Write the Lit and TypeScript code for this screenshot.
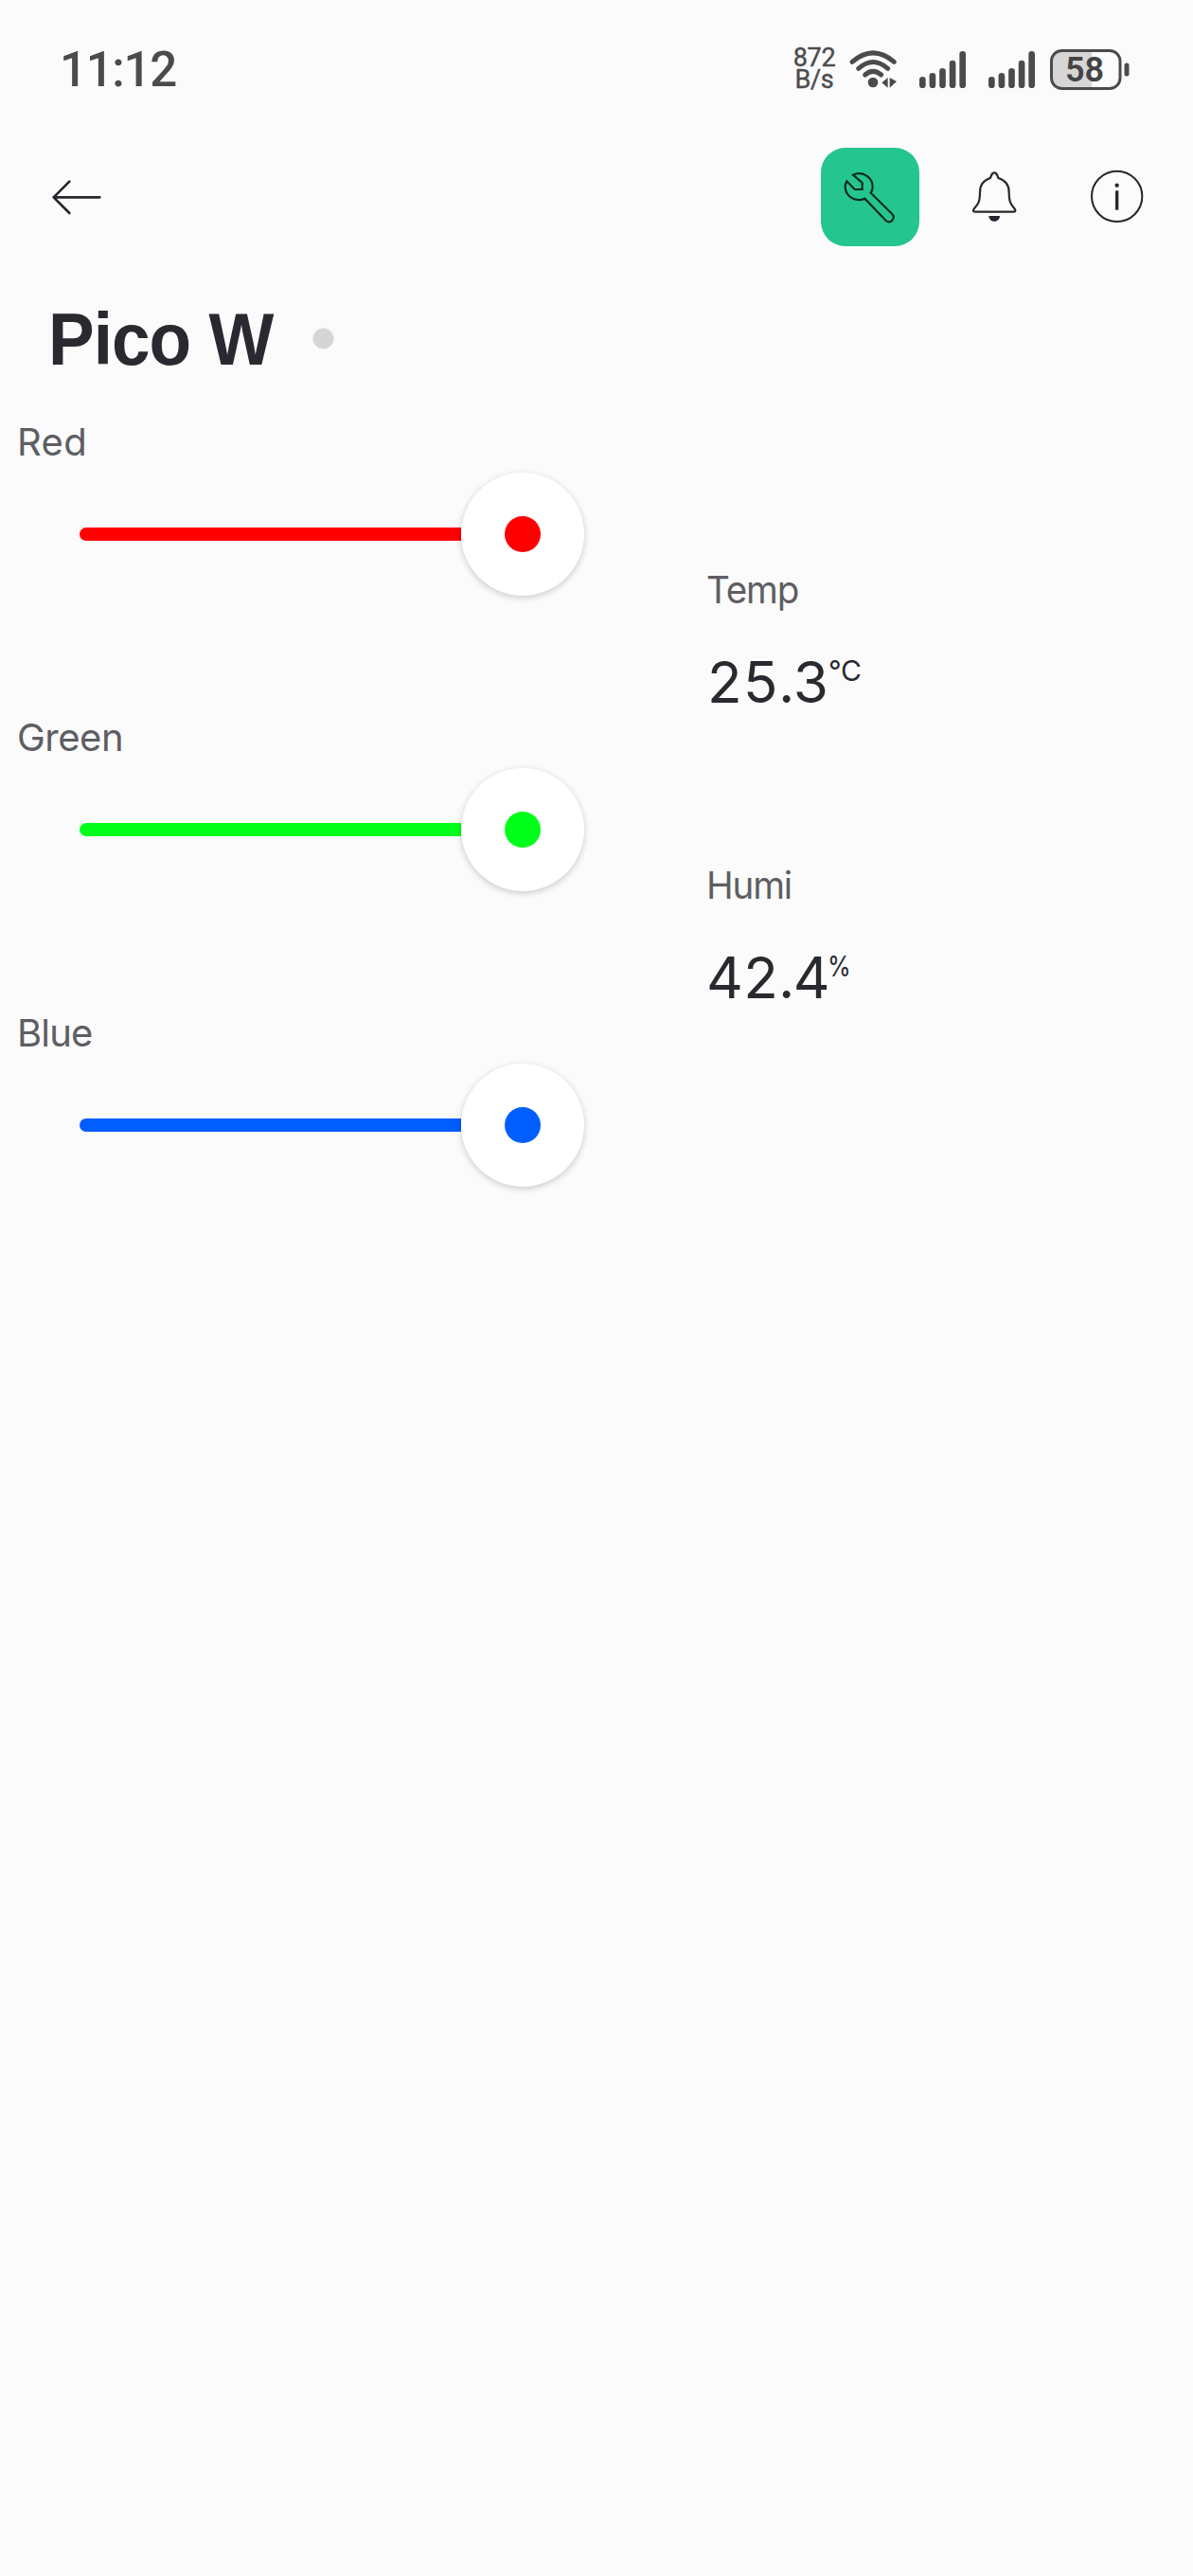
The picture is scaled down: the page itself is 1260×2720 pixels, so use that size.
import { LitElement, html, css, svg } from "lit";
import { customElement, property } from "lit/decorators.js";

@customElement("status-bar")
class StatusBar extends LitElement {
  static styles = css`
    :host { display: flex; height: 146px; align-items: center; color: #4b4b4b; fill: #4b4b4b; stroke: #4b4b4b; font-family: Roboto, sans-serif; padding: 0 67px 0 63px; box-sizing: border-box; }
    svg { display: block; overflow: visible; }
    .time { font-size: 51px; font-weight: 500; letter-spacing: -1.3px; line-height: 60px; margin-right: auto; padding-top: 2px; }
    .rate { display: flex; flex-direction: column; font-size: 27px; line-height: 23px; width: 46px; text-align: center; letter-spacing: -0.3px; margin-right: 14px; -webkit-text-stroke: 0.4px #4b4b4b; }
    .wifi { margin-right: 22px; }
    .sim { margin-right: 24px; }
    .sim2 { margin-right: 16px; }
    .bat { display: grid; align-items: center; }
    .bat > * { grid-area: 1 / 1; }
    .pct { font-size: 36px; font-weight: 600; line-height: 42px; padding: 1px 0 0 16px; color: #444; z-index: 1; }
  `;
  private bars(cls: string) {
    return html`<svg class=${cls} width="49" height="39" viewBox="0 0 147 117" stroke="none">
      ${[36, 48, 63, 88, 117].map((h, i) => svg`<rect x=${i * 31.75} y=${117 - h} width="20" height=${h} rx="10" />`)}
    </svg>`;
  }
  render() {
    return html`
      <div class="time">11:12</div>
      <div class="rate"><span>872</span><span>B/s</span></div>
      <svg class="wifi" width="52" height="44" viewBox="232 60 156 132" fill="none" stroke-width="15" stroke-linecap="round">
        <path d="M241 103Q307 46 374 103M261 124Q307 83 354 124M282 144Q307 122 333 144" />
        <circle cx="307" cy="168" r="16" fill="#4b4b4b" stroke="none" />
        <path d="M335 169L354 153V185ZM360 153V185L382 165Z" fill="#4b4b4b" stroke="none" />
      </svg>
      ${this.bars("sim")}${this.bars("sim2")}
      <div class="bat">
        <svg width="84" height="43" viewBox="0 0 84 43">
          <path d="M44 1.5H13Q1.5 1.5 1.5 13V30Q1.5 41.5 13 41.5H44Z" fill="#d6d6d6" stroke="none" />
          <rect x="1.5" y="1.5" width="72.5" height="40" rx="11" fill="none" stroke-width="3" />
          <rect x="78.5" y="14.5" width="5" height="14" rx="2.5" stroke="none" />
        </svg>
        <span class="pct">58</span>
      </div>`;
  }
}

@customElement("tool-bar")
class ToolBar extends LitElement {
  static styles = css`
    :host { display: flex; height: 124px; align-items: center; padding: 0 51px 0 54px; box-sizing: border-box; }
    svg { display: block; overflow: visible; fill: none; stroke: #26262e; stroke-linejoin: round; stroke-linecap: round; }
    .back { margin-right: auto; }
    .edit { width: 104px; height: 104px; border-radius: 26px; background: #25c58f; display: grid; place-items: center; margin-right: 55px; }
    .edit svg { stroke: #0b2a22; stroke-linejoin: miter; }
    .bell { margin-right: 77px; }
    .solid { fill: #26262e; stroke: none; }
  `;
  render() {
    return html`
      <svg class="back" width="54" height="40" viewBox="73 115 162 120" stroke-width="8">
        <path d="M227 176H81M131 126L81 176L131 226" />
      </svg>
      <div class="edit">
        <svg width="104" height="104" viewBox="51 48 312 312" stroke-width="6.500">
          <path d="M153 134C182 120 215 141 215 172Q215 182 209 191L277 258C289 271 272 291 257 279L190 209C160 222 128 202 128 171Q128 162 133 154L158 180L182 180L182 159Z" />
        </svg>
      </div>
      <svg class="bell" width="48" height="56" viewBox="77 90 144 168" stroke-width="6.500">
        <path d="M137 114C141 101 143 97 149.500 97C156 97 158 101 162 114C184 121 196 136 196 158C196 190 201 196 215 213Q219 221 210 221H90Q80 221 84 213C99 196 104 190 104 158C104 136 115 121 137 114Z" />
        <path class="solid" d="M132 234H167C166 257 133 257 132 234Z" />
      </svg>
      <svg width="58" height="58" viewBox="452.500 86 174 174" stroke-width="6">
        <circle cx="538.500" cy="171" r="80" />
        <circle class="solid" cx="538.500" cy="136" r="6.500" />
        <path class="solid" d="M533.500 153H543.500V214H533.500Z" />
      </svg>`;
  }
}

@customElement("color-slider")
class ColorSlider extends LitElement {
  @property() label = "";
  @property() color = "";
  static styles = css`
    :host { display: block; height: 312px; }
    .label { font-size: 40px; line-height: 60px; color: #5e5e62; padding: 1px 0 0 18px; height: 62px; }
    .red { letter-spacing: 0.4px; }
    .green { letter-spacing: -0.5px; }
    .blue { letter-spacing: -0.8px; }
    .row { display: flex; align-items: center; padding-left: 84px; }
    .track { width: 403px; height: 14px; border-radius: 7px 0 0 7px; }
    .thumb { width: 130px; height: 130px; border-radius: 50%; background: #fff; box-shadow: 0 2px 7px rgba(0, 0, 0, 0.2); display: grid; place-items: center; }
    .dot { width: 38px; height: 38px; border-radius: 50%; }
  `;
  render() {
    const fill = `background:${this.color}`;
    return html`
      <div class="label ${this.label.toLowerCase()}">${this.label}</div>
      <div class="row">
        <div class="track" style=${fill}></div>
        <div class="thumb"><div class="dot" style=${fill}></div></div>
      </div>`;
  }
}

@customElement("value-display")
class ValueDisplay extends LitElement {
  @property() label = "";
  @property() value = "";
  @property() unit = "";
  static styles = css`
    :host { display: block; height: 312px; }
    .label { font-size: 40px; line-height: 60px; color: #5e5e62; letter-spacing: -1.2px; padding-top: 1px; height: 91px; transform: scaleX(0.965); transform-origin: left; }
    .value { display: flex; align-items: flex-start; font-size: 60px; line-height: 72px; color: #29292f; letter-spacing: -0.7px; font-variant-numeric: tabular-nums; }
    .unit { font-size: 30px; line-height: 36px; margin: 6px 0 0 -1px; letter-spacing: -0.3px; }
    .humi { transform: scaleX(0.84); transform-origin: left; margin-left: -2px; }
  `;
  render() {
    return html`
      <div class="label">${this.label}</div>
      <div class="value">${this.value}<span class="unit ${this.label.toLowerCase()}">${this.unit}</span></div>`;
  }
}

@customElement("app-root")
class AppRoot extends LitElement {
  static styles = css`
    :host { display: block; min-height: 2720px; background: #fbfbfb; font-family: Inter, "Liberation Sans", sans-serif; }
    .title { display: flex; align-items: center; height: 166px; box-sizing: border-box; padding: 10px 0 0 51px; }
    h1 { margin: 0; font: 700 77px/90px "Liberation Sans", sans-serif; letter-spacing: -1px; color: #29292f; width: 279px; white-space: nowrap; transform: scaleX(0.947); transform-origin: left; }
    .state { width: 21px; height: 21px; border-radius: 50%; background: #d5d5d5; border: 1px solid #e9e9e9; margin-top: -2px; }
    .grid { display: grid; grid-template-columns: 746px 1fr; }
    .right { padding-top: 156px; }
  `;
  render() {
    return html`
      <status-bar></status-bar>
      <tool-bar></tool-bar>
      <div class="title"><h1>Pico W</h1><div class="state"></div></div>
      <div class="grid">
        <div>
          <color-slider label="Red" color="#ff0000"></color-slider>
          <color-slider label="Green" color="#00ff1a"></color-slider>
          <color-slider label="Blue" color="#005eff"></color-slider>
        </div>
        <div class="right">
          <value-display label="Temp" value="25.3" unit="°C"></value-display>
          <value-display label="Humi" value="42.4" unit="%"></value-display>
        </div>
      </div>`;
  }
}
